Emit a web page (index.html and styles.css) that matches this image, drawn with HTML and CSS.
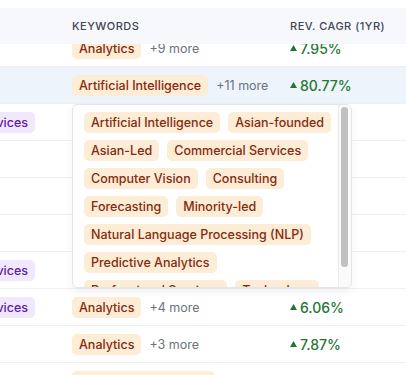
FILE: index.html
```html
<!DOCTYPE html>
<html lang="en">
<head>
    <meta charset="UTF-8">
    <meta name="viewport" content="width=device-width, initial-scale=1.0">
    <title>Companies</title>
    <link rel="stylesheet" href="styles.css">
</head>
<body>

    <div class="page">
        <div class="thead">
            <div class="th"></div>
            <div class="th">Keywords</div>
            <div class="th">Rev. CAGR (1yr)</div>
        </div>

        <div class="tbody">
            <div class="row first">
                <div class="cell sector"></div>
                <div class="cell kw"><span class="chip">Analytics</span><span class="more">+9 more</span></div>
                <div class="cell cagr"><svg class="up" width="7" height="6" viewBox="0 0 7 6"><polygon points="3.5,0 7,6 0,6"/></svg>7.95%</div>
            </div>
            <div class="row active">
                <div class="cell sector"></div>
                <div class="cell kw"><span class="chip">Artificial Intelligence</span><span class="more">+11 more</span></div>
                <div class="cell cagr"><svg class="up" width="7" height="6" viewBox="0 0 7 6"><polygon points="3.5,0 7,6 0,6"/></svg>80.77%</div>

                <div class="popover">
                    <div class="pop-list">
                        <span class="chip">Artificial Intelligence</span>
                        <span class="chip">Asian-founded</span>
                        <span class="chip">Asian-Led</span>
                        <span class="chip">Commercial Services</span>
                        <span class="chip">Computer Vision</span>
                        <span class="chip">Consulting</span>
                        <span class="chip">Forecasting</span>
                        <span class="chip">Minority-led</span>
                        <span class="chip">Natural Language Processing (NLP)</span>
                        <span class="chip">Predictive Analytics</span>
                        <span class="chip">Professional Services</span>
                        <span class="chip">Technology</span>
                    </div>
                    <div class="scrollbar"><div class="thumb"></div></div>
                </div>
            </div>
            <div class="row">
                <div class="cell sector"><span class="tag">Professional Services</span></div>
                <div class="cell kw"><span class="chip">Consulting</span><span class="more">+5 more</span></div>
                <div class="cell cagr"></div>
            </div>
            <div class="row">
                <div class="cell sector"></div>
                <div class="cell kw"></div>
                <div class="cell cagr"></div>
            </div>
            <div class="row">
                <div class="cell sector"></div>
                <div class="cell kw"></div>
                <div class="cell cagr"></div>
            </div>
            <div class="row">
                <div class="cell sector"></div>
                <div class="cell kw"></div>
                <div class="cell cagr"></div>
            </div>
            <div class="row">
                <div class="cell sector"><span class="tag">Professional Services</span></div>
                <div class="cell kw"></div>
                <div class="cell cagr"></div>
            </div>
            <div class="row">
                <div class="cell sector"><span class="tag">Professional Services</span></div>
                <div class="cell kw"><span class="chip">Analytics</span><span class="more">+4 more</span></div>
                <div class="cell cagr"><svg class="up" width="7" height="6" viewBox="0 0 7 6"><polygon points="3.5,0 7,6 0,6"/></svg>6.06%</div>
            </div>
            <div class="row">
                <div class="cell sector"></div>
                <div class="cell kw"><span class="chip">Analytics</span><span class="more">+3 more</span></div>
                <div class="cell cagr"><svg class="up" width="7" height="6" viewBox="0 0 7 6"><polygon points="3.5,0 7,6 0,6"/></svg>7.87%</div>
            </div>
            <div class="row">
                <div class="cell sector"></div>
                <div class="cell kw"><span class="chip">Professional Services</span><span class="more">+6 more</span></div>
                <div class="cell cagr"><svg class="up" width="7" height="6" viewBox="0 0 7 6"><polygon points="3.5,0 7,6 0,6"/></svg>5.12%</div>
            </div>
        </div>
    </div>

</body>
</html>
```

FILE: styles.css
```css
body {
    margin: 0;
    font-family: Inter, "Noto Sans", sans-serif;
    background-color: white;
    overflow: hidden;
}
.page {
    padding-top: 8px;
}
.thead, .row {
    display: grid;
    grid-template-columns: 72px 218px 1fr;
}
.thead {
    height: 36px;
    align-items: center;
    background-color: #f7f8fb;
}
.th {
    font-size: 11px;
    font-weight: 500;
    letter-spacing: 0.5px;
    text-transform: uppercase;
    color: #404654;
}
.tbody {
    height: 331px;
    overflow: hidden;
}
.row {
    position: relative;
    height: 36px;
    border-bottom: 1px solid #eff0f3;
    align-items: center;
}
.row.first {
    margin-top: -14px;
}
.row.active {
    background-color: #eef4fc;
}
.cell {
    display: flex;
    align-items: center;
    white-space: nowrap;
}
.sector {
    justify-content: flex-end;
    overflow: hidden;
    padding-right: 37px;
}
.chip, .tag {
    flex-shrink: 0;
    font-size: 12.5px;
    font-weight: 500;
    line-height: 17px;
    padding: 2px 7px;
    border-radius: 5px;
}
.chip {
    background-color: #fdecd6;
    color: #862a0e;
}
.tag {
    background-color: #f2e8fe;
    color: #5e21ab;
}
.more {
    margin-left: 8px;
    font-size: 12.5px;
    color: #6b7280;
}
.cagr {
    font-size: 14px;
    font-weight: 500;
    color: #1f7733;
}
.up {
    fill: #1f7733;
    margin-right: 3px;
}
.popover {
    position: absolute;
    top: 37px;
    left: 72px;
    width: 278px;
    height: 182px;
    display: flex;
    background-color: white;
    border: 1px solid #e3e5ea;
    border-radius: 6px;
    box-shadow: 0 4px 10px rgba(0, 0, 0, 0.06);
    overflow: hidden;
    z-index: 2;
}
.pop-list {
    flex: 1;
    overflow: hidden;
    display: flex;
    flex-wrap: wrap;
    align-content: flex-start;
    gap: 7px 8px;
    padding: 7px 6px 7px 11px;
}
.scrollbar {
    width: 7px;
    padding: 2px 3px 0 2px;
    background-color: #fafafa;
    border-left: 1px solid #ebebeb;
}
.thumb {
    height: 160px;
    background-color: #c1c1c1;
    border-radius: 4px;
}
```
